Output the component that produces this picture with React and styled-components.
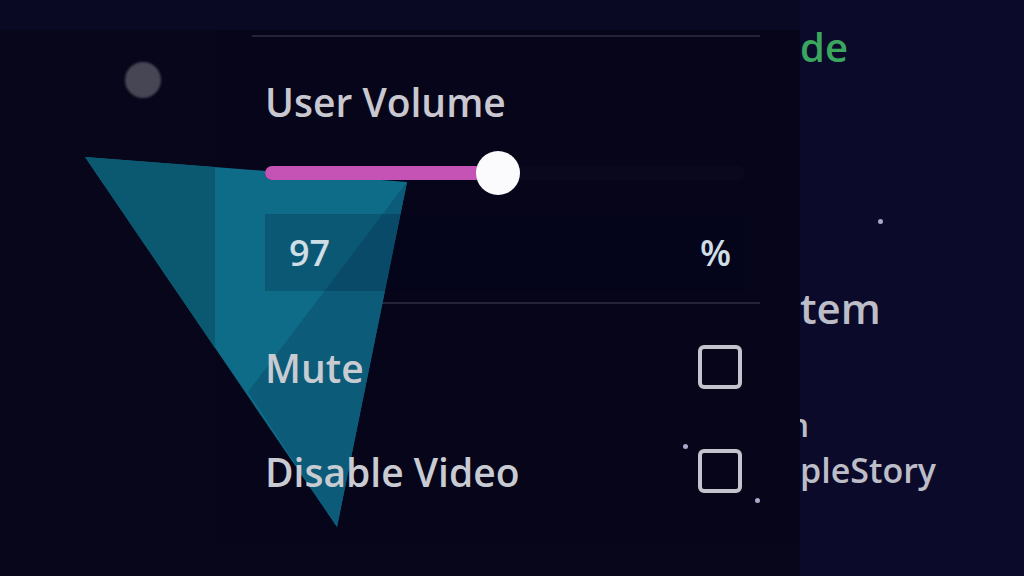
import styled, { createGlobalStyle } from 'styled-components'

const Global = createGlobalStyle`
  html, body {
    margin: 0;
    padding: 0;
    background: #07061a;
  }
  body {
    font-family: "Open Sans", "Noto Sans", sans-serif;
  }
`

const Page = styled.div`
  position: relative;
  width: 1024px;
  height: 576px;
  overflow: hidden;
  display: grid;
  grid-template-columns: 215px 585px 1fr;
  background: #07061a;
`

const LeftCol = styled.div`
  background: linear-gradient(#0a0923 0, #0a0923 30px, #07061a 30px);
  padding: 62px 0 0 125px;
`

const Dot = styled.div`
  width: 36px;
  height: 36px;
  border-radius: 50%;
  background: #474654;
  filter: blur(1px);
`

const Panel = styled.div`
  background: linear-gradient(#0a0923 0, #0a0923 30px, #06051a 30px, #06051a 545px, #07061a 545px);
  padding: 35px 40px 0 37px;
  display: flex;
  flex-direction: column;
`

const Separator = styled.div`
  height: 2px;
  background: #25233a;
  margin: ${p => p.$m || '0'};
`

const Item = styled.div`
  position: relative;
  z-index: 2;
  padding: 0 15px 0 13px;
`

const Title = styled(Item)`
  color: #c9c7d0;
  font-size: 39px;
  font-weight: 600;
  line-height: 54px;
  margin-top: 38px;
`

const SliderWrap = styled(Item)`
  height: 44px;
  margin-top: 22px;
  display: flex;
  align-items: center;
`

const Track = styled.div`
  position: relative;
  flex: 1;
  height: 14px;
  border-radius: 7px;
  background: #09081c;
`

const Fill = styled.div`
  height: 100%;
  border-radius: 7px;
  background: #c553b6;
`

const Thumb = styled.div`
  position: absolute;
  top: 50%;
  width: 44px;
  height: 44px;
  margin: -22px 0 0 -22px;
  border-radius: 50%;
  background: #fbfbfd;
`

const InputRow = styled(Item)`
  margin-top: 19px;
`

const InputBox = styled.div`
  height: 77px;
  display: flex;
  align-items: center;
  justify-content: space-between;
  padding: 0 14px 0 24px;
  background: rgba(0, 0, 25, 0.18);
  color: #cfdde4;
  font-size: 36px;
  font-weight: 600;
`

const CheckRow = styled(Item)`
  display: flex;
  align-items: center;
  justify-content: space-between;
  height: 60px;
  margin-top: ${p => p.$top}px;
  color: #c9cbd2;
  font-size: 39px;
  font-weight: 600;
`

const Box = styled.div`
  width: 36px;
  height: 36px;
  border: 4px solid #c4c4cc;
  border-radius: 6px;
  margin-right: 3px;
`

const RightCol = styled.div`
  background: #0b0a2b;
  display: flex;
  flex-direction: column;
  padding-top: 22px;
  color: #bdbdc8;
  font-weight: 600;
  position: relative;
`

const Word = styled.div`
  font-size: ${p => p.$size}px;
  line-height: ${p => p.$size + 10}px;
  margin-top: ${p => p.$top}px;
  color: ${p => p.$color || '#bdbdc8'};
  white-space: nowrap;
`

const Clip = styled.div`
  width: 9px;
  overflow: hidden;
  direction: rtl;
`

const Speck = styled.div`
  position: absolute;
  z-index: 3;
  left: ${p => p.$x}px;
  top: ${p => p.$y}px;
  width: 5px;
  height: 5px;
  border-radius: 50%;
  background: #a9a8c8;
`

const Overlay = styled.svg`
  position: absolute;
  left: 0;
  top: 0;
  z-index: 1;
  pointer-events: none;
`

export default function App() {
  const volume = 97
  // the slider runs from 0 to 200 %
  const pos = volume / 2
  return (
    <>
      <Global />
      <Page>
        <LeftCol>
          <Dot />
        </LeftCol>
        <Panel>
          <Separator />
          <Title>User Volume</Title>
          <SliderWrap>
            <Track>
              <Fill style={{ width: `${pos}%` }} />
              <Thumb style={{ left: `${pos}%` }} />
            </Track>
          </SliderWrap>
          <InputRow>
            <InputBox>
              <span>{volume}</span>
              <span>%</span>
            </InputBox>
          </InputRow>
          <Separator $m="11px 0 0" />
          <CheckRow $top={33}>
            <span>Mute</span>
            <Box />
          </CheckRow>
          <CheckRow $top={44}>
            <span>Disable Video</span>
            <Box />
          </CheckRow>
        </Panel>
        <RightCol>
          <Word $size={40} $top={0} $color="#3ba65e">de</Word>
          <Word $size={42} $top={210}>tem</Word>
          <Word $size={32} $top={70}>
            <Clip>n</Clip>
          </Word>
          <Word $size={34} $top={2}>pleStory</Word>
        </RightCol>
        <Speck $x={878} $y={219} />
        <Speck $x={683} $y={444} />
        <Speck $x={755} $y={498} />
        <Overlay width="1024" height="576" viewBox="0 0 1024 576">
          <polygon points="85,157 407,182 337,527" fill="#0e6c89" />
          <polygon points="85,157 215,167 215,348" fill="#0b5970" />
          <polygon points="407,182 248,392 337,527" fill="#0b5b79" />
        </Overlay>
      </Page>
    </>
  )
}
